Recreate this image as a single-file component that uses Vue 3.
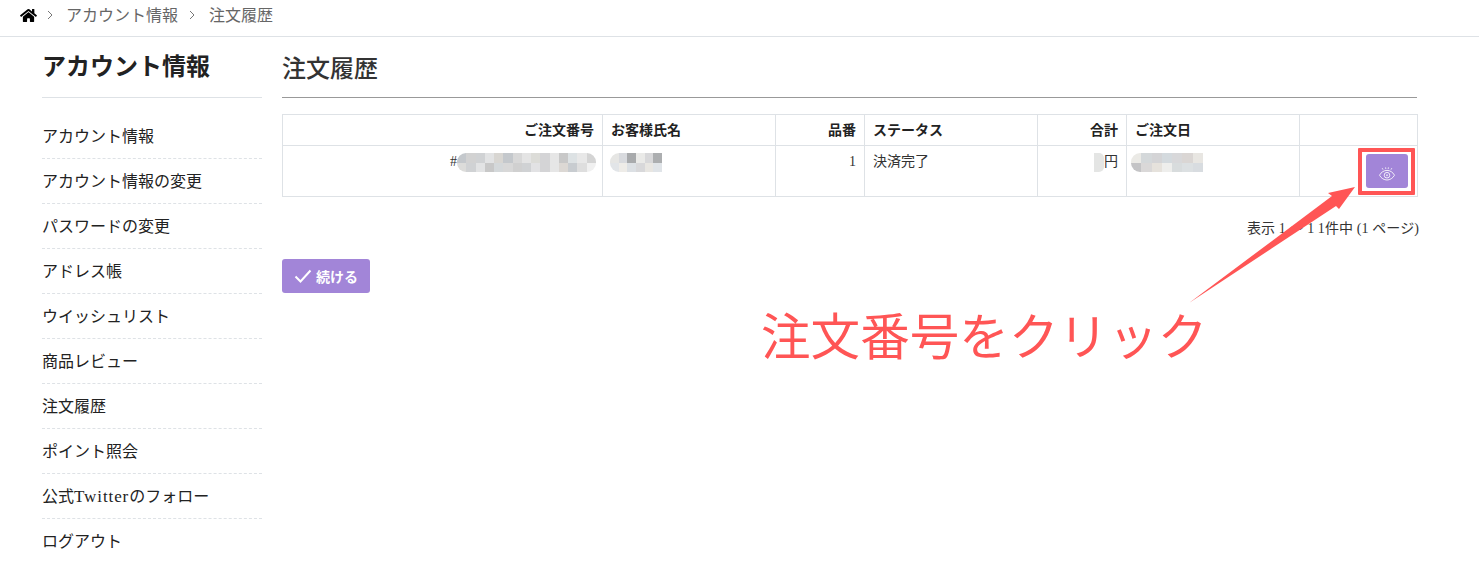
<script setup>
const menu = [['アカウント情報'],['アカウント情報の変更'],['パスワードの変更'],['アドレス帳'],['ウイッシュリスト'],['商品レビュー'],['注文履歴'],['ポイント照会'],['公式','Twitter','のフォロー'],['ログアウト']]
const blob1 = ['#c4c8cc','#dcdcda','#d2d2d2','#d0d2d4','#d0d2d4','#e2e3e4','#e2e3e4','#c8c8c8','#d8d6d2','#d4d8da','#c4c8cc','#d8d8d8','#d8d8d8','#d0d0d0','#e4e4e4',
 '#d0d2d4','#dcdcd8','#e2e2e4','#d4d4d6','#d4d4d6','#e6e6e6','#e6e6e6','#c8c8c8','#dcd8d4','#dde2e4','#c8ccd0','#e8e8e8','#dedede','#d4d4d4','#f0f0f0']
const blob2 = ['#e6e6e4','#e2e5e8','#d8dade','#eeece8','#a8aaac','#dce0e4','#eaeae8','#d8d8da','#d8d8da','#e8e6e2','#acaeb0','#e0e4e8']
const blob3 = ['#ebeae6','#c4c4c6','#d4d8da','#dad8d8','#d4d4d6','#e6e2dc','#d4dade','#eeeeec','#d8d8da','#d8dcdd','#dad6d4','#dce0e2','#e8e6e2','#d8dce0']
const heads = [['ご注文番号','r'],['お客様氏名','l'],['品番','r'],['ステータス','l'],['合計','r'],['ご注文日','l'],['','l']]
const widths = [320,173,89,173,89,173,118]
</script>

<template>
  <div class="page">
    <nav class="crumbs">
      <svg class="home" viewBox="0 0 576 512" aria-hidden="true"><path fill="#000" d="M280.37 148.26L96 300.11V464a16 16 0 0 0 16 16l112.06-.29a16 16 0 0 0 15.92-16V368a16 16 0 0 1 16-16h64a16 16 0 0 1 16 16v95.64a16 16 0 0 0 16 16.05L464 480a16 16 0 0 0 16-16V300L295.67 148.26a12.19 12.19 0 0 0-15.3 0zM571.6 251.47L488 182.56V44.05a12 12 0 0 0-12-12h-56a12 12 0 0 0-12 12v72.61L318.47 43a48 48 0 0 0-61 0L4.34 251.47a12 12 0 0 0-1.6 16.9l25.5 31A12 12 0 0 0 45.15 301l235.22-193.74a12.19 12.19 0 0 1 15.3 0L530.9 301a12 12 0 0 0 16.9-1.6l25.5-31a12 12 0 0 0-1.7-16.93z"/></svg>
      <svg class="chev" viewBox="0 0 6 10" aria-hidden="true"><path d="M1 1l4 4-4 4" fill="none" stroke="#777" stroke-width="1"/></svg>
      <span>アカウント情報</span>
      <svg class="chev" viewBox="0 0 6 10" aria-hidden="true"><path d="M1 1l4 4-4 4" fill="none" stroke="#777" stroke-width="1"/></svg>
      <span>注文履歴</span>
    </nav>

    <div class="body">
      <aside class="side">
        <h2 class="side-title">アカウント情報</h2>
        <ul class="menu">
          <li v-for="m in menu" :key="m.join('')">
            <template v-if="m.length === 1">{{ m[0] }}</template>
            <template v-else>{{ m[0] }}<span class="latin">{{ m[1] }}</span>{{ m[2] }}</template>
          </li>
        </ul>
      </aside>

      <main class="main">
        <h2 class="main-title">注文履歴</h2>
        <table class="tbl">
          <colgroup><col v-for="(w, i) in widths" :key="i" :style="{ width: w + 'px' }"></colgroup>
          <thead>
            <tr><th v-for="(h, i) in heads" :key="i" :class="h[1]">{{ h[0] }}</th></tr>
          </thead>
          <tbody>
            <tr>
              <td class="r"><span class="hash">#</span><span class="blob b1"><i v-for="(c, i) in blob1" :key="i" :style="{ background: c }"></i></span></td>
              <td><span class="blob b2"><i v-for="(c, i) in blob2" :key="i" :style="{ background: c }"></i></span></td>
              <td class="r">1</td>
              <td>決済完了</td>
              <td class="r"><span class="blob b4"></span>円</td>
              <td><span class="blob b3"><i v-for="(c, i) in blob3" :key="i" :style="{ background: c }"></i></span></td>
              <td class="r action">
                <button class="eye-btn" type="button" aria-label="表示">
                  <svg viewBox="0 0 18 14" width="18" height="14" aria-hidden="true">
                    <g fill="none" stroke="#fff" stroke-width="1" opacity="0.85">
                      <path d="M1.5 8.2C5 1.8 13 1.8 16.5 8.2C13 14.6 5 14.6 1.5 8.2Z"/>
                      <circle cx="9" cy="8.2" r="2.8"/>
                      <path d="M4.2 1.2l.8 1.4M7.6.4l.2 1.5M10.4.4l-.2 1.5M13.8 1.2l-.8 1.4"/>
                    </g>
                    <circle cx="9" cy="8.2" r="1" fill="#fff" opacity="0.7"/>
                  </svg>
                </button>
              </td>
            </tr>
          </tbody>
        </table>
        <p class="pager">表示 1 ～ 1 1件中 (1 ページ)</p>
        <button class="go" type="button">
          <svg viewBox="0 0 18 14" width="18" height="14" aria-hidden="true"><path d="M1.5 7.5l5 5L16.5 1.5" fill="none" stroke="#fff" stroke-width="2"/></svg>
          <span>続ける</span>
        </button>
      </main>
    </div>

    <div class="red-box"></div>
    <svg class="arrow" viewBox="0 0 1479 569" aria-hidden="true"><path fill="#ff5555" d="M1189 303L1332 196L1328 193L1355 187L1339 209L1336 206Z"/></svg>
    <div class="note">注文番号をクリック</div>
  </div>
</template>

<style>
html, body { margin: 0; background: #fff; }
</style>

<style scoped>
.page { position: relative; width: 1479px; height: 569px; overflow: hidden; background: #fff; color: #222; font-family: "Liberation Serif", "Noto Sans CJK JP", serif; font-size: 14px; }
.crumbs { height: 28px; padding: 0 0 8px 20px; border-bottom: 1px solid #dee2e6; display: flex; align-items: center; font-size: 16px; color: #666; }
.home { width: 17px; height: 15px; margin: 3px 10px 0 0; }
.chev { width: 6px; height: 10px; margin: 2px 13px 0 0; }
.crumbs span + .chev { margin-left: 11px; margin-right: 14px; }
.body { display: flex; padding-left: 42px; gap: 20px; }
.side { width: 220px; }
.side-title { margin: 0; height: 61px; box-sizing: border-box; border-bottom: 1px solid #dee2e6; font-size: 24px; font-weight: 700; line-height: 60px; color: #222; }
.menu { list-style: none; margin: 16px 0 0; padding: 0; font-size: 16px; }
.menu li { height: 45px; padding-top: 1px; line-height: 44px; box-sizing: border-box; border-bottom: 1px dashed #dee2e6; color: #222; }
.menu li:last-child { border-bottom: 0; }
.latin { font-size: 17px; letter-spacing: 0.9px; }
.main { width: 1135px; }
.main-title { margin: 0; height: 61px; box-sizing: border-box; border-bottom: 1px solid #999; font-size: 24px; font-weight: 500; line-height: 64px; color: #333; }
.tbl { width: 1135px; margin-top: 16px; border-collapse: collapse; table-layout: fixed; font-size: 14px; }
.tbl th, .tbl td { border: 1px solid #dee2e6; padding: 9px 8px 7px; text-align: left; vertical-align: top; line-height: 14px; }
.tbl th { font-weight: 700; color: #222; }
.tbl td { height: 34px; color: #333; }
.tbl .r { text-align: right; }
.hash { vertical-align: top; }
.blob { display: inline-grid; vertical-align: top; height: 19px; margin-top: -2px; overflow: hidden; border-radius: 9px; grid-template-rows: 1fr 1fr; grid-auto-flow: column; }
.blob i { display: block; }
.b1 { width: 139px; margin-right: -2px; grid-template-columns: repeat(15, 1fr); }
.b2 { width: 52px; margin-left: -1px; grid-template-columns: repeat(6, 1fr); border-radius: 9px 0 0 9px; }
.b3 { width: 72px; margin-left: -4px; grid-template-columns: repeat(7, 1fr); border-radius: 9px 0 0 9px; }
.b4 { width: 10px; background: #e4e5e4; border-radius: 0 5px 5px 0; }
.tbl .action { padding: 8px 9px 8px 8px; }
.eye-btn { display: flex; align-items: center; justify-content: center; width: 42px; height: 34px; margin-left: auto; padding: 6px 0 0; border: 0; border-radius: 3px; background: #a285d8; }
.pager { margin: 24px -2px 0 0; text-align: right; font-size: 14px; line-height: 16px; letter-spacing: 0.1px; color: #333; }
.go { display: flex; align-items: center; gap: 4px; height: 34px; width: 88px; margin-top: 22px; padding: 0 0 0 12px; border: 0; border-radius: 3px; background: #a285d8; color: #fff; font-family: inherit; font-size: 14px; font-weight: 700; }
.red-box { position: absolute; left: 1358px; top: 148px; width: 57px; height: 47px; box-sizing: border-box; border: 4px solid #ff5555; border-radius: 1px; }
.arrow { position: absolute; inset: 0; width: 1479px; height: 569px; pointer-events: none; }
.note { position: absolute; left: 761px; top: 303px; font-family: "Noto Sans CJK JP", sans-serif; font-size: 49.6px; line-height: 60px; color: #ff5555; white-space: nowrap; }
</style>
